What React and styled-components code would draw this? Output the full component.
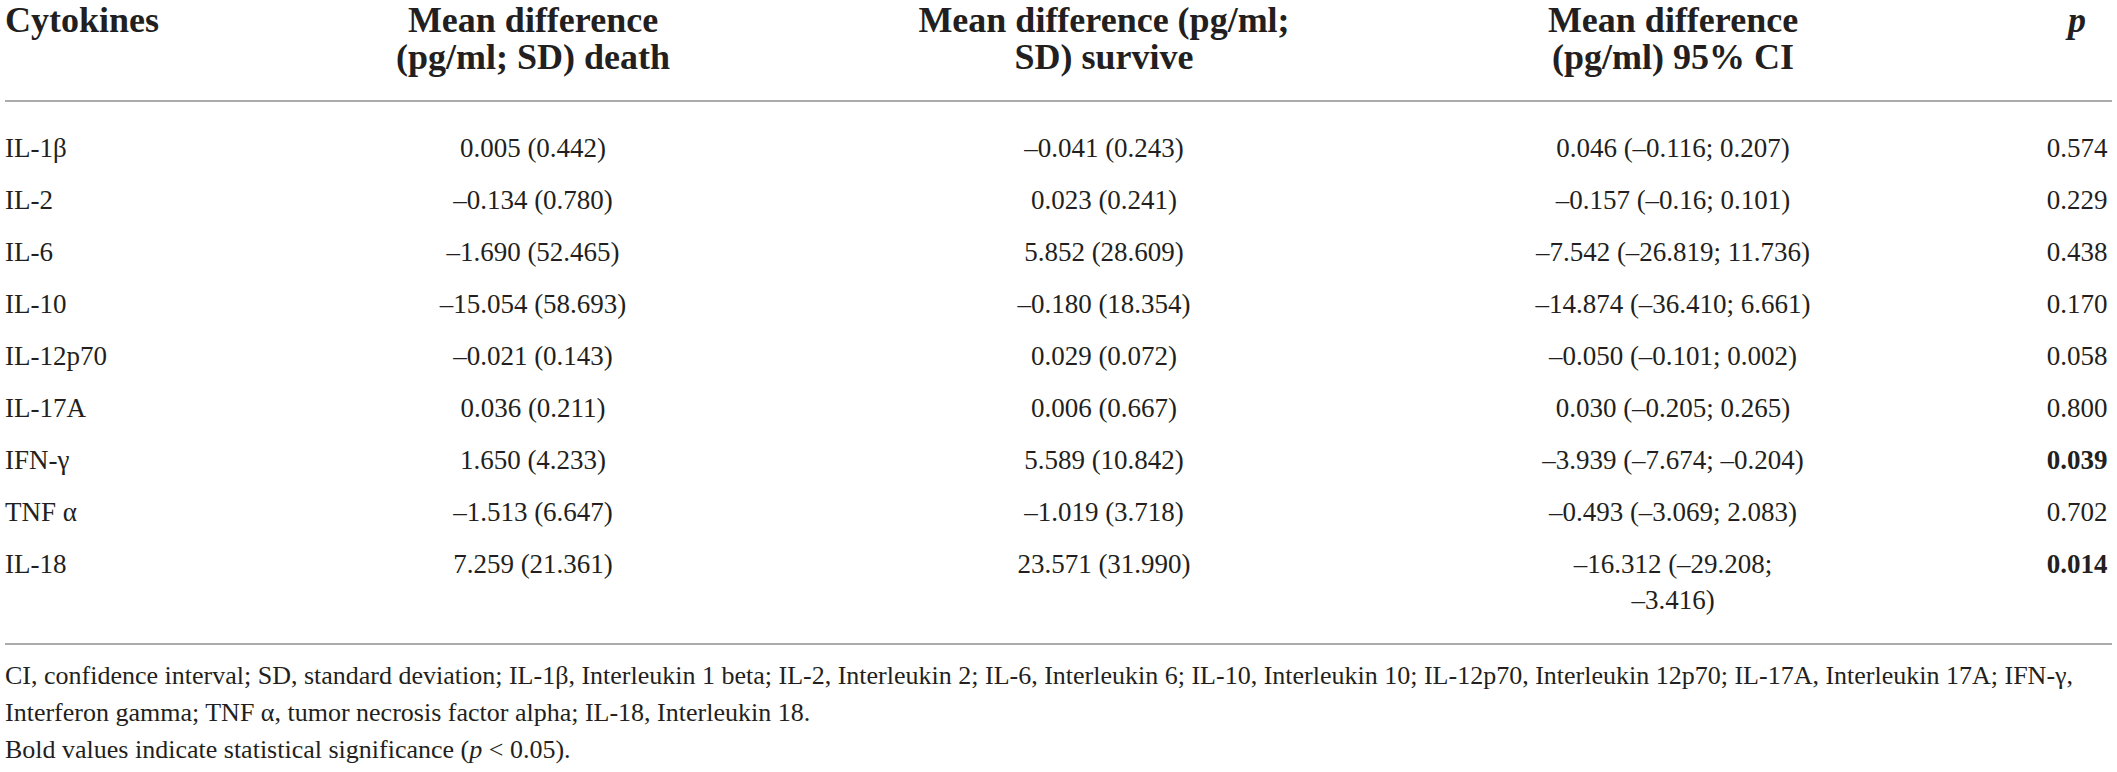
import styled, { createGlobalStyle } from "styled-components";

const GlobalStyle = createGlobalStyle`
  body {
    margin: 0;
    background: #ffffff;
    color: #231f20;
    font-family: "Liberation Serif", "Times New Roman", serif;
  }
`;

const SPage = styled.div`
  padding: 2px 5px 0;
`;

const STable = styled.table`
  width: 2107px;
  border-collapse: collapse;
  table-layout: fixed;
`;

const SHeadCell = styled.th`
  padding: 0 ${(p) => p.$inset || 0}px 24px;
  font-size: 36px;
  line-height: 37px;
  font-weight: 700;
  text-align: ${(p) => p.$align || "center"};
  vertical-align: top;
  border-bottom: 2px solid #ababab;
`;

const SCell = styled.td`
  padding: ${(p) => (p.$first ? 28 : 8)}px ${(p) => p.$inset || 0}px
    ${(p) => (p.$last ? 25 : 8)}px;
  font-size: 27px;
  line-height: 36px;
  font-weight: ${(p) => (p.$bold ? 700 : 400)};
  text-align: ${(p) => p.$align || "center"};
  vertical-align: top;
  border-bottom: ${(p) => (p.$last ? "2px solid #ababab" : "none")};
`;

const SItalic = styled.i`
  font-style: italic;
`;

const SNoWrap = styled.span`
  white-space: nowrap;
`;

const SFootnote = styled.div`
  margin-top: 12px;
  font-size: 26px;
  line-height: 37px;
`;

const columns = [
  { width: 157, inset: 0, align: "left" },
  { width: 742, inset: 221 },
  { width: 400, inset: 0 },
  { width: 738, inset: 228 },
  { width: 70, inset: 0 },
];

const headers = [
  "Cytokines",
  "Mean difference (pg/ml; SD) death",
  "Mean difference (pg/ml; SD) survive",
  "Mean difference (pg/ml) 95% CI",
  <SItalic key="p">p</SItalic>,
];

// word joiner keeps a minus sign on the same line as its number
const num = (s) => s.replace(/–/g, "–\u2060");

const rows = [
  ["IL-1β", "0.005 (0.442)", "–0.041 (0.243)", "0.046 (–0.116; 0.207)", "0.574"],
  ["IL-2", "–0.134 (0.780)", "0.023 (0.241)", "–0.157 (–0.16; 0.101)", "0.229"],
  ["IL-6", "–1.690 (52.465)", "5.852 (28.609)", "–7.542 (–26.819; 11.736)", "0.438"],
  ["IL-10", "–15.054 (58.693)", "–0.180 (18.354)", "–14.874 (–36.410; 6.661)", "0.170"],
  ["IL-12p70", "–0.021 (0.143)", "0.029 (0.072)", "–0.050 (–0.101; 0.002)", "0.058"],
  ["IL-17A", "0.036 (0.211)", "0.006 (0.667)", "0.030 (–0.205; 0.265)", "0.800"],
  ["IFN-γ", "1.650 (4.233)", "5.589 (10.842)", "–3.939 (–7.674; –0.204)", "0.039", true],
  ["TNF α", "–1.513 (6.647)", "–1.019 (3.718)", "–0.493 (–3.069; 2.083)", "0.702"],
  ["IL-18", "7.259 (21.361)", "23.571 (31.990)", "–16.312 (–29.208; –3.416)", "0.014", true],
];

const App = () => {
  return (
    <SPage>
      <GlobalStyle />
      <STable>
        <colgroup>
          {columns.map((c, i) => (
            <col key={i} style={{ width: c.width }} />
          ))}
        </colgroup>
        <thead>
          <tr>
            {headers.map((h, i) => (
              <SHeadCell key={i} $inset={columns[i].inset} $align={columns[i].align}>
                {h}
              </SHeadCell>
            ))}
          </tr>
        </thead>
        <tbody>
          {rows.map((r, ri) => (
            <tr key={ri}>
              {r.slice(0, 5).map((v, ci) => (
                <SCell
                  key={ci}
                  $inset={columns[ci].inset}
                  $align={columns[ci].align}
                  $first={ri === 0}
                  $last={ri === rows.length - 1}
                  $bold={ci === 4 && r[5]}
                >
                  {num(v)}
                </SCell>
              ))}
            </tr>
          ))}
        </tbody>
      </STable>
      <SFootnote>
        CI, confidence interval; SD, standard deviation; IL-1β, Interleukin 1 beta; IL-2,
        Interleukin 2; IL-6, Interleukin 6; IL-10, Interleukin 10; IL-12p70, Interleukin
        12p70; IL-17A, Interleukin 17A; <SNoWrap>IFN-γ,</SNoWrap> Interferon gamma; TNF α,
        tumor necrosis factor alpha; IL-18, Interleukin 18.
        <br />
        Bold values indicate statistical significance (<SItalic>p</SItalic> &lt; 0.05).
      </SFootnote>
    </SPage>
  );
};

export default App;
